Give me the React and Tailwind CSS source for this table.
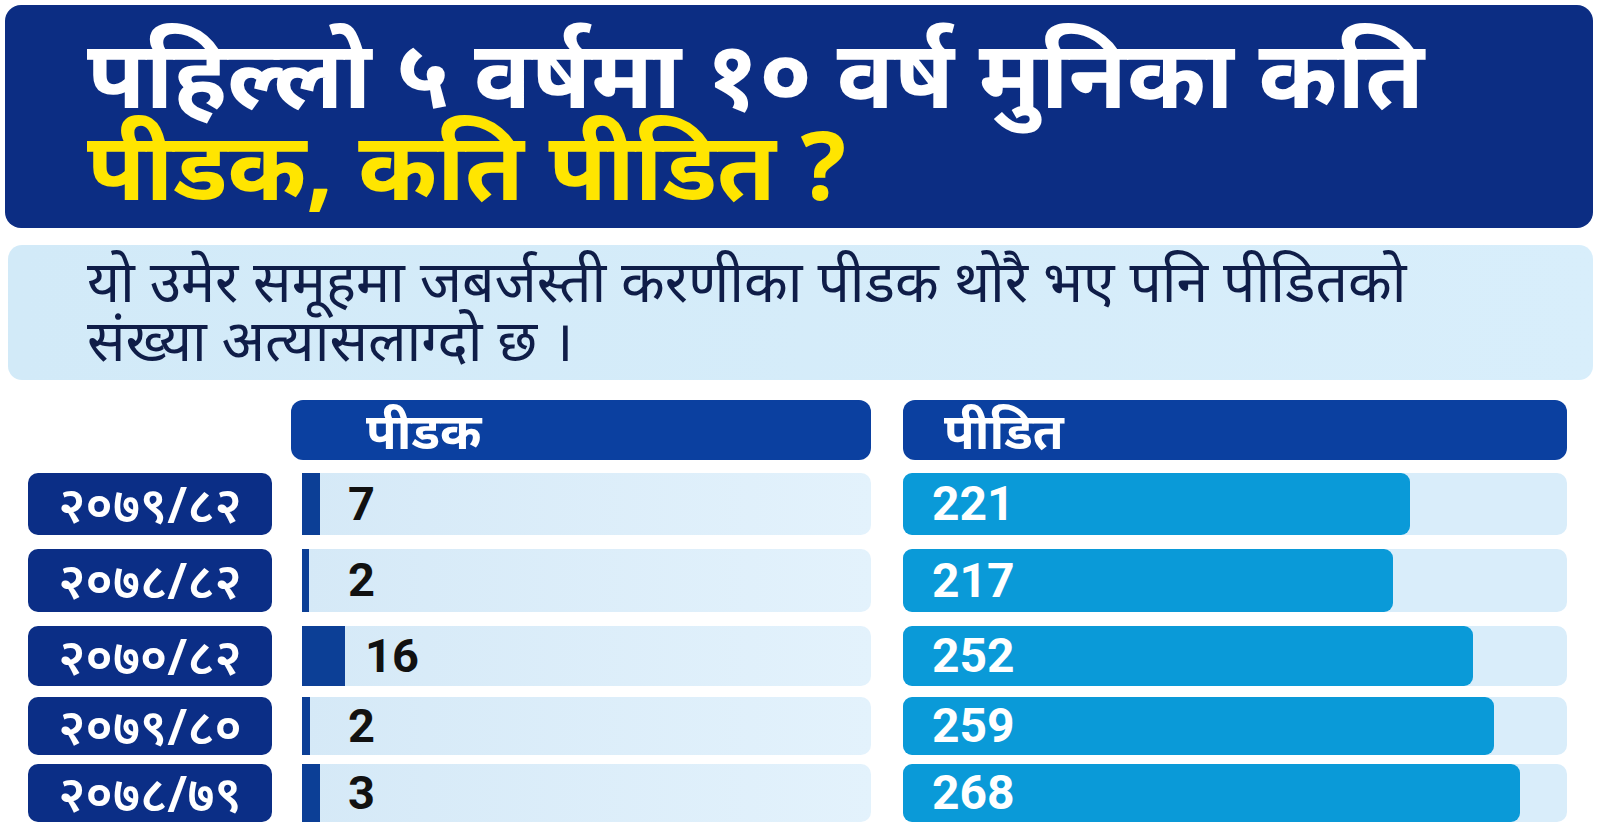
import React from "react";

const rows = [
  { label: "२०७९/८२", pidak: 7, pidakW: 18, pidit: 221, fill: 507, h: "h-[62px]", mt: "mt-[13px]" },
  { label: "२०७८/८२", pidak: 2, pidakW: 7, pidit: 217, fill: 490, h: "h-[63px]", mt: "mt-[14px]" },
  { label: "२०७०/८२", pidak: 16, pidakW: 43, pidit: 252, fill: 570, h: "h-[60px]", mt: "mt-[14px]" },
  { label: "२०७९/८०", pidak: 2, pidakW: 8, pidit: 259, fill: 591, h: "h-[58px]", mt: "mt-[11px]" },
  { label: "२०७८/७९", pidak: 3, pidakW: 18, pidit: 268, fill: 617, h: "h-[58px]", mt: "mt-[9px]" },
];

const num = { fontFamily: '"Roboto", "Liberation Sans", sans-serif' };

export default function App() {
  return (
    <div
      className="w-[1600px] h-[837px] bg-white overflow-hidden pt-[5px]"
      style={{ fontFamily: '"Noto Sans", "Noto Sans Devanagari", sans-serif' }}
    >
      {/* title */}
      <div className="ml-[5px] w-[1588px] h-[223px] rounded-[16px] bg-[#0c2d83] pl-[82px] pt-[20px]">
        <div className="text-[95px] leading-[92px] font-bold text-white whitespace-nowrap">
          पहिल्लो ५ वर्षमा १० वर्ष मुनिका कति
        </div>
        <div className="text-[95px] leading-[92px] font-bold text-[#ffe500] whitespace-nowrap">
          पीडक, कति पीडित ?
        </div>
      </div>

      {/* subtitle */}
      <div className="mt-[17px] ml-[8px] w-[1585px] h-[135px] rounded-[14px] bg-gradient-to-r from-[#d2eaf8] to-[#d8eefb] pl-[79px] pt-[6px]">
        <div className="text-[57px] leading-[59px] text-[#0f1d48] whitespace-nowrap">
          यो उमेर समूहमा जबर्जस्ती करणीका पीडक थोरै भए पनि पीडितको
        </div>
        <div className="text-[57px] leading-[59px] text-[#0f1d48] whitespace-nowrap">
          संख्या अत्यासलाग्दो छ ।
        </div>
      </div>

      {/* column headers */}
      <div className="flex mt-[20px] h-[60px]">
        <div className="ml-[291px] w-[580px] h-full rounded-[12px] bg-[#0b40a0] pl-[75px] flex items-center text-[50px] font-bold text-white">
          पीडक
        </div>
        <div className="ml-[32px] w-[664px] h-full rounded-[12px] bg-[#0b40a0] pl-[41px] flex items-center text-[50px] font-bold text-white">
          पीडित
        </div>
      </div>

      {/* rows */}
      {rows.map((r, i) => (
        <div key={i} className={`flex ${r.h} ${r.mt}`}>
          <div className="ml-[28px] w-[244px] h-full rounded-[10px] bg-[#0b2e86] flex items-center justify-center text-[50px] font-semibold text-white">
            {r.label}
          </div>
          <div className="ml-[30px] w-[569px] h-full rounded-r-[10px] bg-gradient-to-r from-[#d5e9f7] to-[#e3f2fc] flex items-center">
            <div className="h-full bg-[#0c3f96]" style={{ width: r.pidakW }} />
            <span
              className="text-[47px] font-bold text-[#111111]"
              style={{ marginLeft: Math.max(46 - r.pidakW, 20), ...num }}
            >
              {r.pidak}
            </span>
          </div>
          <div className="ml-[32px] w-[664px] h-full rounded-[10px] bg-[#d9edfa] flex">
            <div
              className="h-full rounded-[9px] bg-[#0a9ad8] flex items-center pl-[29px] text-[48px] font-bold text-white"
              style={{ width: r.fill, ...num }}
            >
              {r.pidit}
            </div>
          </div>
        </div>
      ))}
    </div>
  );
}
